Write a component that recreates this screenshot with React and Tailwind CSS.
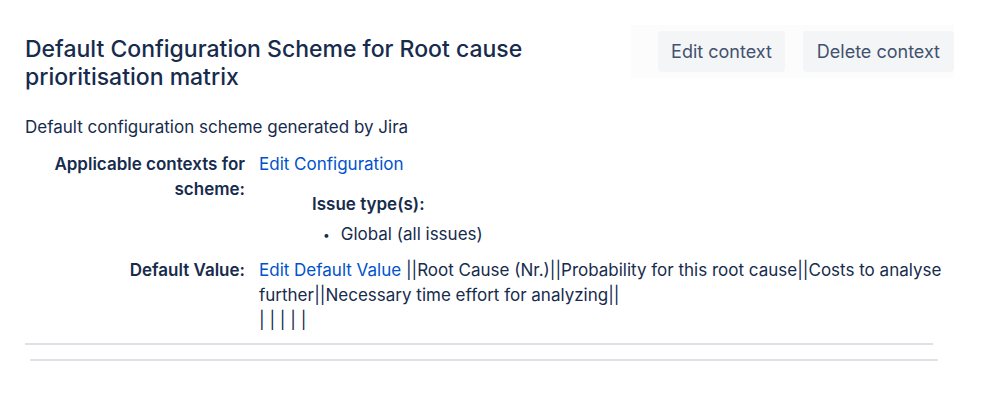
export default function App() {
  return (
    <div className="w-[998px] h-[396px] bg-white text-[#172b4d] font-['Inter','Liberation_Sans',sans-serif] overflow-hidden">
      <div className="pl-[25px] pr-[44px] pt-[31px]">
        {/* header */}
        <div className="flex justify-between items-start">
          <h1 className="text-[23px] leading-[28px] font-medium w-[560px] mt-[4px]">
            Default Configuration Scheme for Root cause prioritisation matrix
          </h1>
          <div className="flex gap-[18px] bg-[#fcfcfd] pl-[27px] pt-[6px] pb-[6px] -mt-[6px]">
            <button className="h-[41px] px-[13px] rounded bg-[#f4f5f7] text-[#42526e] text-[18px]">Edit context</button>
            <button className="h-[41px] px-[14px] rounded bg-[#f4f5f7] text-[#42526e] text-[18px]">Delete context</button>
          </div>
        </div>

        <p className="mt-[24px] text-[17px] leading-[25px]">Default configuration scheme generated by Jira</p>

        {/* details */}
        <div className="mt-[12px] grid grid-cols-[220px_1fr] gap-x-[14px] text-[17px] leading-[25px]">
          <div className="text-right font-semibold pl-[20px]">Applicable contexts for scheme:</div>
          <div>
            <a className="text-[#0052cc]">Edit Configuration</a>
            <div className="pl-[53px] mt-[15px]">
              <div className="font-semibold">Issue type(s):</div>
              <ul className="mt-[5px] pl-[11px]">
                <li className="flex items-center gap-[11px]"><span className="text-[12px]">•</span>Global (all issues)</li>
              </ul>
            </div>
          </div>
          <div className="text-right font-semibold mt-[11px]">Default Value:</div>
          <div className="mt-[11px] w-[690px]">
            <a className="text-[#0052cc]">Edit Default Value</a>{" "}
            <span>||Root Cause (Nr.)||Probability for this root cause||Costs to analyse further||Necessary time effort for analyzing||</span>
            <br />| | | | |
          </div>
        </div>

        <div className="mt-[10px] w-[908px] h-[2px] bg-[#dfe1e6]"></div>
        <div className="mt-[14px] ml-[5px] w-[908px] h-[2px] bg-[#dfe1e6]"></div>
      </div>
    </div>
  );
}
